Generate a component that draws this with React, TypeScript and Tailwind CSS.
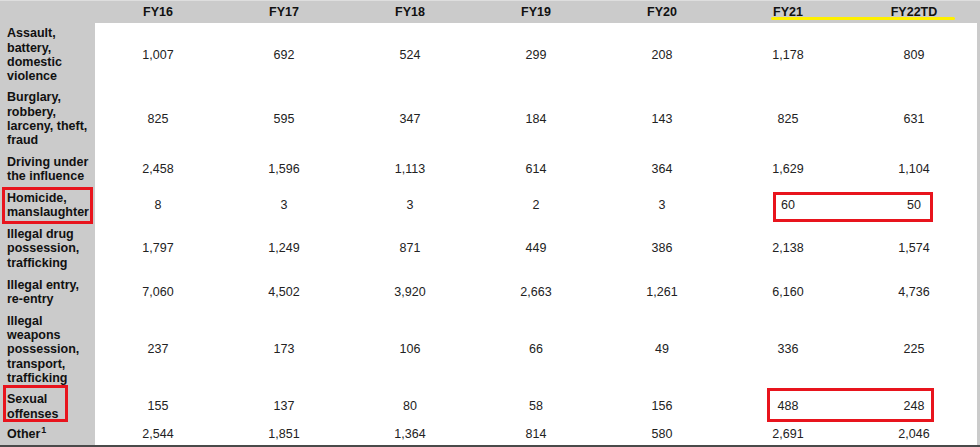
import React from "react";

type Row = { label: React.ReactNode; h: string; v: string[] };

const rows: Row[] = [
  { label: <>Assault,<br />battery,<br />domestic<br />violence</>, h: "h-[64px]", v: ["1,007", "692", "524", "299", "208", "1,178", "809"] },
  { label: <>Burglary,<br />robbery,<br />larceny, theft,<br />fraud</>, h: "h-[64px]", v: ["825", "595", "347", "184", "143", "825", "631"] },
  { label: <>Driving under<br />the influence</>, h: "h-[36px]", v: ["2,458", "1,596", "1,113", "614", "364", "1,629", "1,104"] },
  { label: <>Homicide,<br />manslaughter</>, h: "h-[36px]", v: ["8", "3", "3", "2", "3", "60", "50"] },
  { label: <>Illegal drug<br />possession,<br />trafficking</>, h: "h-[51px]", v: ["1,797", "1,249", "871", "449", "386", "2,138", "1,574"] },
  { label: <>Illegal entry,<br />re-entry</>, h: "h-[36px]", v: ["7,060", "4,502", "3,920", "2,663", "1,261", "6,160", "4,736"] },
  { label: <>Illegal<br />weapons<br />possession,<br />transport,<br />trafficking</>, h: "h-[79px]", v: ["237", "173", "106", "66", "49", "336", "225"] },
  { label: <>Sexual<br />offenses</>, h: "h-[35px]", v: ["155", "137", "80", "58", "156", "488", "248"] },
  { label: <>Other<span className="text-[9px] relative -top-[5px] ml-[1px]">1</span></>, h: "h-[21px]", v: ["2,544", "1,851", "1,364", "814", "580", "2,691", "2,046"] },
];

const years = ["FY16", "FY17", "FY18", "FY19", "FY20", "FY21", "FY22TD"];

export default function App() {
  return (
    <div
      className="relative w-[980px] h-[447px] overflow-hidden bg-[#cbcbcb] text-[12.5px] leading-[14.3px]"
      style={{ fontFamily: '"Liberation Sans", Arial, sans-serif' }}
    >
      <div className="h-[1px] bg-[#dedede]" />
      <div className="flex h-[22px] items-center font-bold text-[#111]">
        <div className="w-[95px]" />
        {years.map((y) => (
          <div key={y} className="w-[126px] text-center">
            {y}
          </div>
        ))}
      </div>
      <div className="flex flex-col w-[977px]">
        {rows.map((r, i) => (
          <div key={i} className={`flex ${r.h}`}>
            <div className="w-[95px] flex items-center pl-[7px] font-bold text-[#111] bg-[#cbcbcb]">
              <div>{r.label}</div>
            </div>
            <div className="flex flex-1 bg-white items-center text-[#222]">
              {r.v.map((v, j) => (
                <div key={j} className="w-[126px] text-center">
                  {v}
                </div>
              ))}
            </div>
          </div>
        ))}
      </div>
      <div className="h-[2px] bg-[#4a4a4a]" />

      {/* yellow underline */}
      <div className="absolute left-[771px] top-[17px] w-[184px] h-[3px] rounded-full bg-[#fff000]" />

      {/* red annotation boxes */}
      <div className="absolute left-[2px] top-[187px] w-[91px] h-[37px] border-[3px] border-[#e8141d]" />
      <div className="absolute left-[3px] top-[385px] w-[65px] h-[37px] border-[3px] border-[#e8141d]" />
      <div className="absolute left-[773px] top-[192px] w-[160px] h-[30px] border-[3px] border-[#e8141d]" />
      <div className="absolute left-[767px] top-[388px] w-[167px] h-[34px] border-[3px] border-[#e8141d]" />
    </div>
  );
}
